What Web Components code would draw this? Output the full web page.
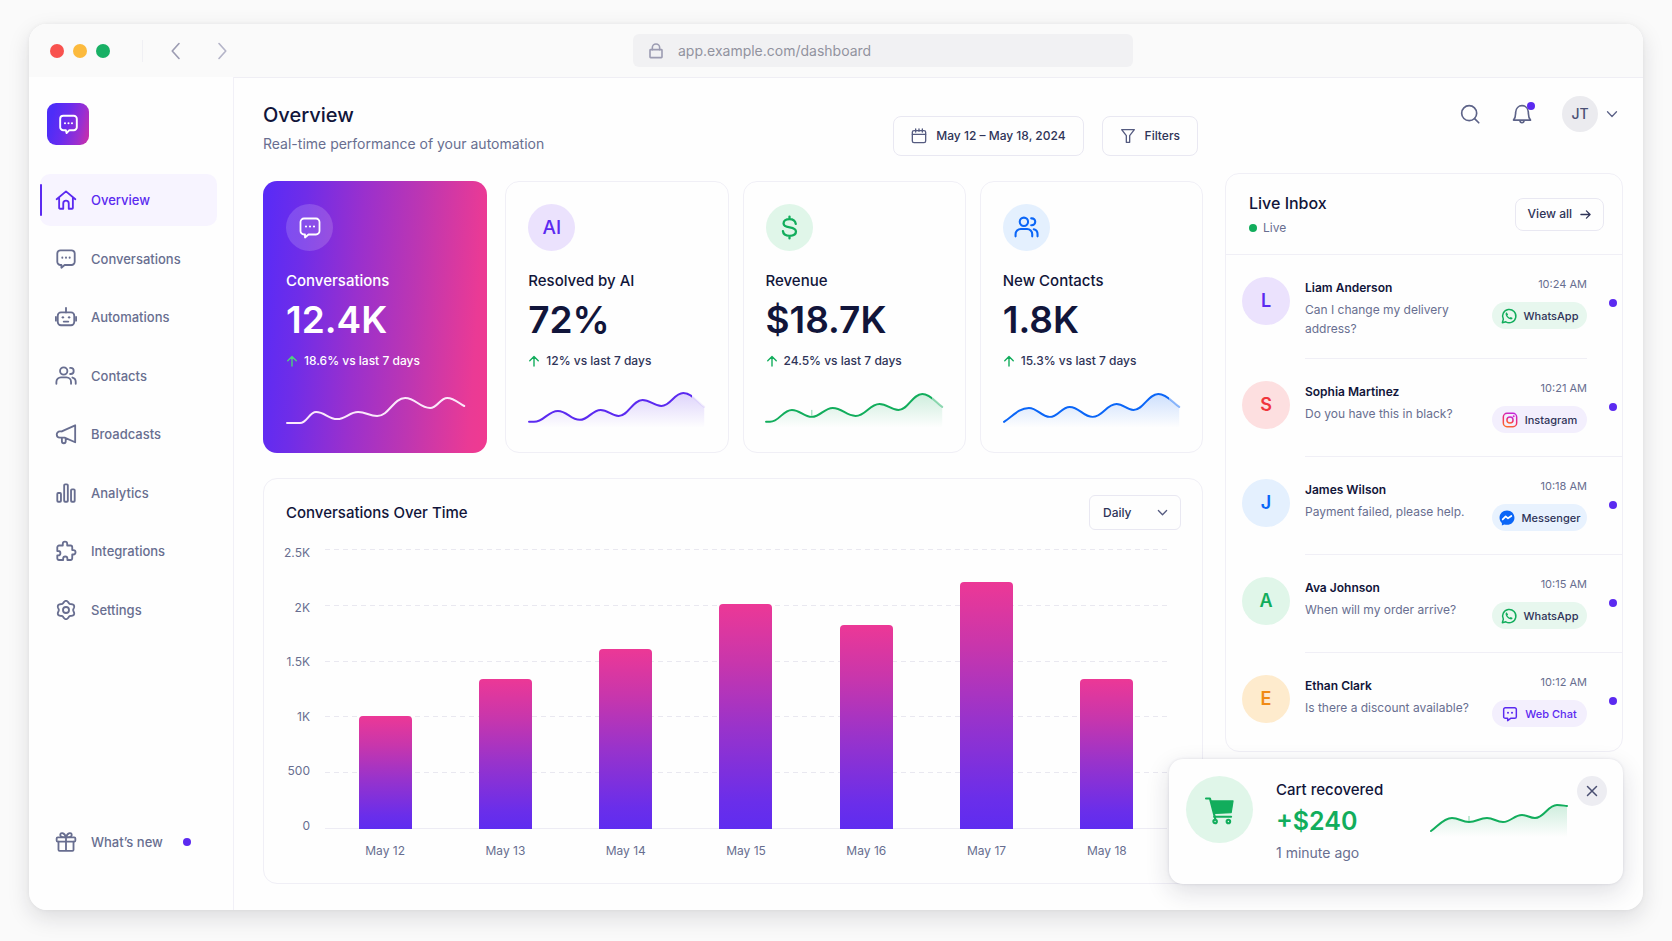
<!DOCTYPE html>
<html lang="en">
<head>
<meta charset="utf-8">
<meta name="viewport" content="width=device-width, initial-scale=1">
<title>Overview dashboard</title>
<style>
  :root {
    --ink: #11153a;
    --body: #2f3458;
    --muted: #686e90;
    --faint: #9a9bb0;
    --line: #f0eff6;
    --line-strong: #e9e8f2;
    --violet: #5b2af0;
    --violet-soft: #ebe2fd;
    --green: #12ad5c;
    --green-soft: #e0f6e9;
    --blue: #0b66f7;
    --blue-soft: #e4f0fe;
    --red: #f0353c;
    --red-soft: #fddfe0;
    --orange: #f08a14;
    --orange-soft: #feebcd;
    --surface: #fefefe;
  }
  * { box-sizing: border-box; }
  body {
    margin: 0;
    background: #fafafa;
    color: var(--ink);
    font-family: Inter, "Liberation Sans", sans-serif;
    font-size: 13px;
  }
</style>
</head>
<body>
<browser-window address="app.example.com/dashboard">
  <side-nav slot="side">
    <nav-item icon="home" active>Overview</nav-item>
    <nav-item icon="chat">Conversations</nav-item>
    <nav-item icon="bot">Automations</nav-item>
    <nav-item icon="users">Contacts</nav-item>
    <nav-item icon="megaphone">Broadcasts</nav-item>
    <nav-item icon="bars">Analytics</nav-item>
    <nav-item icon="puzzle">Integrations</nav-item>
    <nav-item icon="gear">Settings</nav-item>
    <nav-item icon="gift" slot="footer" dot>What’s new</nav-item>
  </side-nav>

  <dash-main>
    <page-header slot="header" heading="Overview" sub="Real-time performance of your automation">
      <tool-button icon="calendar">May 12 – May 18, 2024</tool-button>
      <tool-button icon="funnel">Filters</tool-button>
    </page-header>

    <stat-card slot="stats" featured label="Conversations" value="12.4K" change="18.6% vs last 7 days">
      <ui-icon slot="icon" name="chat" size="24"></ui-icon>
      <spark-line slot="spark" points="1,33 14,33 30,22 51,29 72,22 91,26 119,8 144,18 161,8 178,16" nofill></spark-line>
    </stat-card>
    <stat-card slot="stats" tone="violet" label="Resolved by AI" value="72%" change="12% vs last 7 days">
      <span slot="icon">AI</span>
      <spark-line slot="spark" points="1,32 6,32 30,21 52,30 73,20 91,26 115,10 134,16 156,3 177,17" fade="0.93" tail="0.08"></spark-line>
    </stat-card>
    <stat-card slot="stats" tone="green" label="Revenue" value="$18.7K" change="24.5% vs last 7 days">
      <ui-icon slot="icon" name="dollar" size="25"></ui-icon>
      <spark-line slot="spark" points="0,32 4,32 26,20 46,27 67,18 90,26 114,14 133,20 157,4 177,17" mark="46,20" fade="0.94" tail="0.45"></spark-line>
    </stat-card>
    <stat-card slot="stats" tone="blue" label="New Contacts" value="1.8K" change="15.3% vs last 7 days">
      <ui-icon slot="icon" name="users" size="25" weight="2"></ui-icon>
      <spark-line slot="spark" points="1,32 26,18 47,27 67,17 90,27 114,14 131,20 156,4 177,17" fade="0.94" tail="0.45"></spark-line>
    </stat-card>

    <bar-chart slot="chart" heading="Conversations Over Time" max="2500"
      data="May 12:1005,May 13:1335,May 14:1605,May 15:2005,May 16:1820,May 17:2205,May 18:1335"
      ticks="2.5K,2K,1.5K,1K,500,0"></bar-chart>

    <user-bar slot="aside" initials="JT"></user-bar>
    <live-inbox slot="aside">
      <inbox-item tone="violet" name="Liam Anderson" time="10:24 AM" channel="WhatsApp">Can I change my delivery address?</inbox-item>
      <inbox-item tone="red" name="Sophia Martinez" time="10:21 AM" channel="Instagram" wide>Do you have this in black?</inbox-item>
      <inbox-item tone="blue" name="James Wilson" time="10:18 AM" channel="Messenger" wide>Payment failed, please help.</inbox-item>
      <inbox-item tone="green" name="Ava Johnson" time="10:15 AM" channel="WhatsApp" wide>When will my order arrive?</inbox-item>
      <inbox-item tone="orange" name="Ethan Clark" time="10:12 AM" channel="Web Chat" last>Is there a discount available?</inbox-item>
    </live-inbox>
  </dash-main>

  <cart-toast slot="overlay" heading="Cart recovered" amount="+$240" when="1 minute ago"></cart-toast>
</browser-window>

<script>
const RESET = `*{box-sizing:border-box}button,input,select{font:inherit;color:inherit;margin:0}button{cursor:pointer}`;

function define(name, render) {
  customElements.define(name, class extends HTMLElement {
    constructor() {
      super();
      this.attachShadow({ mode: 'open' });
    }
    connectedCallback() {
      const t = document.createElement('template');
      t.innerHTML = render(this, k => this.getAttribute(k) || '');
      this.shadowRoot.replaceChildren(t.content.cloneNode(true));
    }
  });
}

/* Six-lobed outline of the settings gear */
const gearPath = (() => {
  let d = '';
  for (let i = 0; i < 96; i++) {
    const a = i / 96 * Math.PI * 2;
    const r = 8.9 + 1.1 * Math.cos(6 * a);
    d += (i ? 'L' : 'M') + (12 + r * Math.sin(a)).toFixed(2) + ' ' + (12 - r * Math.cos(a)).toFixed(2);
  }
  return d + 'Z';
})();

const dot = (x, y, r = 1) => `<circle cx="${x}" cy="${y}" r="${r}" fill="currentColor" stroke="none"/>`;

const ICONS = {
  home: '<path d="M1.8 11.2 12 2.6l10.200 8.600M4.500 9.500V20.600a.9.9 0 0 0 .9.9H9v-5.800a3 3 0 0 1 6 0v5.800h3.600a.9.900 0 0 0 .9-.9V9.500"/>',
  chat: '<path d="M6 2.500h12a3.500 3.500 0 0 1 3.500 3.500v9a3.500 3.500 0 0 1-3.500 3.500h-7.500l-3.500 3v-3H6A3.500 3.500 0 0 1 2.500 15V6A3.500 3.500 0 0 1 6 2.500z"/>' + dot(8, 10.5, 1.1) + dot(12, 10.5, 1.1) + dot(16, 10.5, 1.1),
  logo: '<path d="M6 2h12a3.500 3.500 0 0 1 3.500 3.500v9.500a3.500 3.500 0 0 1-3.500 3.500h-5l-3.200 3.200-.8-3.200H6A3.500 3.500 0 0 1 2.500 15V5.500A3.500 3.500 0 0 1 6 2z"/>' + dot(8, 10.5, 1.2) + dot(12, 10.5, 1.2) + dot(16, 10.5, 1.2),
  bot: '<rect x="3" y="7" width="18" height="14" rx="3.500"/><path d="M12 2v5M1 12v4M23 12v4M9.500 17h5"/>' + dot(8.6, 12.4, 1.3) + dot(15.4, 12.4, 1.3),
  users: '<circle cx="9.500" cy="6.500" r="4"/><path d="M1.500 20.500v-2a5 5 0 0 1 5-5h6a5 5 0 0 1 5 5v2M16.500 3.200h.6a3.300 3.300 0 0 1 0 6.600h-.6M19 13.700a4.800 4.800 0 0 1 3.600 4.800v2"/>',
  megaphone: '<path d="M22 2.500v18.500L10.500 16H5.300a3.400 3.400 0 0 1 0-6.800h2zM7.500 9.200 22 2.500M7.500 16v4a2 2 0 0 0 4.200 0v-3.500"/>',
  bars: '<rect x="2.500" y="12" width="4" height="9.500" rx="1"/><rect x="10" y="2.500" width="4" height="19" rx="1"/><rect x="17.500" y="8" width="4" height="13.500" rx="1"/>',
  puzzle: '<path d="M2.500 8A2 2 0 0 1 4.500 6H8.500V4.200a2.400 2.400 0 0 1 4.800 0V6H17a1.800 1.800 0 0 1 1.800 1.800V11h1.200a2.400 2.400 0 0 1 0 4.800h-1.200V20a1.800 1.800 0 0 1-1.800 1.800H13.500v-1.500a2.300 2.300 0 0 0-4.600 0v1.500H4.300A1.800 1.800 0 0 1 2.500 20v-3.200h1a2.400 2.400 0 0 0 0-4.800h-1z"/>',
  gear: `<path d="${gearPath}"/><circle cx="12" cy="12" r="3.300"/>`,
  gift: '<rect x="1.800" y="7" width="20.400" height="4.600" rx="1.200"/><path d="M3.800 11.600v8.900a1.200 1.200 0 0 0 1.200 1.200h14a1.200 1.200 0 0 0 1.200-1.200v-8.900M12 7v14.500M12 7C10.500 1.500 5.200 1 5.800 4.800 6.100 6.600 8 7 12 7zM12 7c1.500-5.500 6.800-6 6.200-2.200C17.900 6.600 16 7 12 7z"/>',
  calendar: '<rect x="2" y="4" width="20" height="18" rx="2.500"/><path d="M2 9.500h20M7 1.500V6M12 1.500V5M17 1.500V6"/>',
  funnel: '<path d="M2.500 2.500h19l-7 9v10h-5v-10z"/>',
  search: '<circle cx="11" cy="11" r="9"/><path d="M17.500 17.500 22.500 22.500"/>',
  bell: '<path d="M1.800 19.300C4.500 16.500 4.200 14 4.400 9.800 4.700 5.200 8 2 12 2s7.300 3.200 7.600 7.800c.2 4.200-.1 6.700 2.600 9.500zM9.500 19.500c.3 4 4.700 4 5 0"/>',
  left: '<path d="M16 2 7 12l9 10"/>',
  right: '<path d="M8 2l9 10-9 10"/>',
  down: '<path d="M3 7.500 12 17l9-9.500"/>',
  lock: '<rect x="3" y="10" width="18" height="12" rx="1"/><path d="M6.500 10V7a5.500 5.500 0 0 1 11 0v3"/>',
  arrow: '<path d="M2 12h20M14 4l8 8-8 8"/>',
  up: '<path d="M12 22V3M3.500 11.500 12 3l8.500 8.500"/>',
  close: '<path d="M3 3l18 18M21 3 3 21"/>',
  dollar: '<path d="M12 1.500V4M12 20v2.500M18 8.500C17.500 5.500 15 4 12 4 8.800 4 6.300 5.500 6.300 8.100c0 5.400 11.900 2.300 11.900 7.800C18.200 18.600 15.500 20 12.200 20 8.700 20 6 18.600 5.700 15.500" stroke-width="2.200"/>',
  cart: '<path d="M0 2.200h3.400L7.900 19.400" /><path d="M4.500 4.200h18.700L21.600 14.300 7.300 15z" fill="currentColor" stroke-width="1"/><path d="M7 17.800h14.500"/><circle cx="7.800" cy="21.800" r="1.500"/><circle cx="19.200" cy="21.800" r="1.500"/>',
  WhatsApp: '<path d="M2 22l1.500-5.200A10 10 0 1 1 7.200 20.700z"/><path d="M8.300 6.500c-1.500.8-1.700 2.500-1 4.200 1.300 3 3.500 5.200 6.700 6.300 1.800.5 3.200-.3 3.500-1.900l-2.900-1.700-1.400 1.300c-1.700-.8-2.900-2-3.700-3.500l1.200-1.500z" fill="currentColor" stroke="none"/>',
  Instagram: '<g stroke="url(#ig)"><rect x="2" y="2" width="20" height="20" rx="5.500"/><circle cx="12" cy="12" r="4.600"/></g><circle cx="17.500" cy="6.500" r="1.500" fill="#d62bc0" stroke="none"/>',
  Messenger: '<path d="M12 .8C5.500.8.8 5.500.8 11.600c0 3.400 1.300 6.100 3.500 8v3.600l3.600-1.500c1.300.4 2.700.6 4.100.6 6.500 0 11.200-4.700 11.200-10.700S18.500.8 12 .8z" fill="currentColor" stroke="none"/><path d="M5.500 14.200 10 9.500l3.500 3 5-3.500" stroke="#fff" stroke-width="2.600"/>',
  'Web Chat': '<path d="M5 2.500h14A2.500 2.500 0 0 1 21.500 5v11a2.500 2.500 0 0 1-2.500 2.500h-6l-4.500 3.500v-3.500H5A2.500 2.500 0 0 1 2.500 16V5A2.500 2.500 0 0 1 5 2.500z"/>' + dot(9, 10, 1.5) + dot(15, 10, 1.5)
};

define('ui-icon', (el, a) => {
  const s = a('size') || 22;
  const w = a('weight') || 1.8;
  return `<style>:host{display:inline-flex;flex:none}svg{display:block;overflow:visible}</style>
  <svg width="${s}" height="${s}" viewBox="0 0 24 24" fill="none" stroke="currentColor" stroke-width="${w}" stroke-linecap="round" stroke-linejoin="round" aria-hidden="true">
  <defs><linearGradient id="ig" x1="0.7" y1="0" x2="0.3" y2="1"><stop offset="0" stop-color="#c626d8"/><stop offset=".5" stop-color="#ee2a72"/><stop offset="1" stop-color="#fb6a2c"/></linearGradient></defs>
  ${ICONS[a('name')] || ''}</svg>`;
});

/* Smooth line: inner points are crests and troughs, so the tangent there is level */
function smooth(pts) {
  let d = `M${pts[0][0]} ${pts[0][1]}`;
  for (let i = 1; i < pts.length; i++) {
    const [x0, y0] = pts[i - 1], [x1, y1] = pts[i];
    const dx = x1 - x0, dy = y1 - y0;
    const c1 = i === 1 ? [x0 + dx * .3, y0 + dy * .3] : [x0 + dx * .42, y0];
    const c2 = i === pts.length - 1 ? [x1 - dx * .3, y1 - dy * .3] : [x1 - dx * .42, y1];
    d += `C${c1} ${c2} ${x1} ${y1}`;
  }
  return d;
}

define('spark-line', (el, a) => {
  const pts = a('points').split(' ').map(p => p.split(',').map(Number));
  const w = Number(a('width')) || 178, h = Number(a('height')) || 38;
  const line = smooth(pts), end = pts[pts.length - 1][0];
  const fade = a('fade') || 1, tail = a('tail') || 1;
  const mark = a('mark') ? a('mark').split(',') : null;
  return `<style>:host{display:block}svg{display:block;width:100%;height:auto;overflow:visible}</style>
  <svg viewBox="0 0 ${w} ${h}" fill="none" aria-hidden="true">
    <defs>
      <linearGradient id="f" x1="0" y1="0" x2="0" y2="1"><stop offset="0" stop-color="currentColor" stop-opacity=".2"/><stop offset="1" stop-color="currentColor" stop-opacity="0"/></linearGradient>
      <linearGradient id="s" gradientUnits="userSpaceOnUse" x1="0" y1="0" x2="${end}" y2="0"><stop offset="${fade}" stop-color="currentColor"/><stop offset="${fade}" stop-color="currentColor" stop-opacity="${tail}"/></linearGradient>
    </defs>
    ${el.hasAttribute('nofill') ? '' : `<path d="${line}V${h}H${pts[0][0]}Z" fill="url(#f)"/>`}
    ${mark ? `<path d="M${mark[0]} ${mark[1]}v7" stroke="currentColor" stroke-opacity=".5"/>` : ''}
    <path d="${line}" stroke="url(#s)" stroke-width="2" stroke-linecap="round"/>
  </svg>`;
});

define('browser-window', (el, a) => `<style>${RESET}
  :host{display:flex;flex-direction:column;min-height:100vh;padding:24px 29px 31px}
  .win{position:relative;flex:1;display:flex;flex-direction:column;border-radius:18px;background:var(--surface);overflow:hidden}
  .shade{flex:1;display:flex;flex-direction:column;border-radius:18px;box-shadow:0 0 4px rgba(20,20,40,.05),0 8px 22px rgba(20,20,40,.13)}
  header{display:flex;align-items:center;height:53px;padding:0 20px 0 21px;background:#fafafa;color:#9c9cb2}
  .lights{display:flex;gap:9px}
  .lights i{width:14px;height:14px;border-radius:50%;background:#f8524e}
  .lights i:nth-child(2){background:#fcba3d}
  .lights i:nth-child(3){background:#18b065}
  .sep{width:1px;height:22px;margin:0 23px 0 32px;background:#f0f0f4}
  .nav{border:0;background:none;padding:0;display:flex;width:20px;justify-content:center}
  .nav + .nav{margin-left:26px;color:#b4b4c8}
  .a{flex:401}.b{flex:490}
  label{flex:0 1 500px;height:33px;display:flex;align-items:center;gap:14px;padding:0 15px;border-radius:6px;background:#f1f1f3}
  input{flex:1;min-width:0;border:0;padding:0;background:none;outline:0;font-size:14px;line-height:20px;color:#92939f}
  .body{flex:1;display:flex}
</style>
<div class="shade"><div class="win">
  <header>
    <div class="lights"><i></i><i></i><i></i></div>
    <div class="sep"></div>
    <button class="nav" aria-label="Back"><ui-icon name="left" size="18" weight="2.200"></ui-icon></button>
    <button class="nav" aria-label="Forward"><ui-icon name="right" size="18" weight="2.200"></ui-icon></button>
    <div class="a"></div>
    <label><ui-icon name="lock" size="16" weight="2.400"></ui-icon><input type="text" aria-label="Address" value="${a('address')}"></label>
    <div class="b"></div>
  </header>
  <div class="body"><slot name="side"></slot><slot></slot></div>
  <slot name="overlay"></slot>
</div></div>`);

define('side-nav', () => `<style>${RESET}
  :host{display:flex;flex-direction:column;flex:none;width:205px;padding:26px 16px 42px 11px;border-right:1px solid #f1f0f7}
  .logo{display:flex;align-items:center;justify-content:center;width:42px;height:42px;margin:0 0 29px 7px;border-radius:9px;color:#fff;background:linear-gradient(105deg,#4d2df8 15%,#6a2cee 45%,#9a2fd0 75%,#d02fa4 100%)}
  nav{flex:0 1 462px;display:flex;flex-direction:column;justify-content:space-between}
  footer{margin-top:auto}
</style>
<a class="logo" href="#" aria-label="Home"><ui-icon name="logo" size="21" weight="2.200"></ui-icon></a>
<nav aria-label="Main"><slot></slot></nav>
<footer><slot name="footer"></slot></footer>`);

define('nav-item', (el) => `<style>${RESET}
  :host{display:block;color:var(--muted)}
  :host([active]){color:var(--violet)}
  a{position:relative;display:flex;align-items:center;gap:14px;height:52px;padding-left:15px;border-radius:10px;color:inherit;text-decoration:none;font-size:13px;line-height:20px;font-weight:450}
  :host([active]) a{background:#f7f4ff}
  :host([active]) a::before{content:"";position:absolute;left:0;top:10px;bottom:10px;width:2px;border-radius:2px;background:var(--violet)}
  i{width:8px;height:8px;margin-left:6px;border-radius:50%;background:var(--violet)}
</style>
<a href="#"${el.hasAttribute('active') ? ' aria-current="page"' : ''}><ui-icon name="${el.getAttribute('icon')}" size="22" weight="2"></ui-icon><slot></slot>${el.hasAttribute('dot') ? '<i></i>' : ''}</a>`);

define('dash-main', () => `<style>${RESET}
  :host{flex:1;min-width:0;display:grid;grid-template-columns:minmax(0,1fr) 398px;gap:22px;padding:0 20px 26px 29px;border-top:1px solid #efeef4}
  main{display:flex;flex-direction:column;gap:25px;padding-top:25px;min-width:0}
  .stats{display:grid;grid-template-columns:minmax(0,228fr) repeat(3,minmax(0,223fr));gap:14px}
  aside{min-width:0}
</style>
<main><slot name="header"></slot><section class="stats"><slot name="stats"></slot></section><slot name="chart"></slot></main>
<aside><slot name="aside"></slot></aside>`);

define('page-header', (el, a) => `<style>${RESET}
  :host{display:flex;justify-content:space-between;align-items:flex-end;padding-right:5px;min-height:53px}
  .t{align-self:flex-start}
  h1{margin:0 0 7px;font-size:20px;line-height:24px;font-weight:550;color:var(--ink)}
  p{margin:0;font-size:14px;line-height:20px;color:var(--muted)}
  .acts{display:flex;gap:18px}
</style>
<div class="t"><h1>${a('heading')}</h1><p>${a('sub')}</p></div><div class="acts"><slot></slot></div>`);

define('tool-button', (el, a) => `<style>${RESET}
  :host{display:block}
  button{display:flex;align-items:center;gap:9px;height:40px;padding:0 17px;border:1px solid var(--line-strong);border-radius:8px;background:var(--surface);font-size:12px;line-height:16px;font-weight:500;color:var(--body)}
  ui-icon{color:#555b80}
</style>
<button type="button"><ui-icon name="${a('icon')}" size="16" weight="2"></ui-icon><slot></slot></button>`);

define('stat-card', (el, a) => `<style>${RESET}
  :host{display:flex;flex-direction:column;height:272px;padding:22px;border:1px solid var(--line);border-radius:14px;background:var(--surface)}
  :host([featured]){margin-right:4px;border-color:transparent;color:#fff;background:linear-gradient(94deg,#5a2bf6 2%,#6f2de8 18%,#9a30cd 42%,#bd36b2 66%,#ea3a95 92%,#f03a90 100%) border-box;--val:#fff;--chg:#fff;--up:#4fd07c;--spark:#fbe9fb;--tone:#fff;--soft:rgba(255,255,255,.16)}
  :host([tone=violet]){--tone:var(--violet);--soft:var(--violet-soft)}
  :host([tone=green]){--tone:var(--green);--soft:var(--green-soft)}
  :host([tone=blue]){--tone:var(--blue);--soft:var(--blue-soft)}
  .ic{display:flex;align-items:center;justify-content:center;width:47px;height:47px;border-radius:50%;background:var(--soft);color:var(--tone);font-size:19px;line-height:24px;font-weight:550}
  h2{margin:20px 0 0;font-size:15px;line-height:20px;font-weight:500}
  .v{margin-top:7px;font-size:37px;line-height:44px;font-weight:600;color:var(--val,var(--ink))}
  .c{display:flex;align-items:center;gap:6px;margin-top:11px;font-size:12px;line-height:16px;font-weight:450;color:var(--chg,var(--body))}
  .c ui-icon{color:var(--up,var(--green))}
  .s{margin-top:21px;color:var(--spark,var(--tone))}
</style>
<div class="ic"><slot name="icon"></slot></div>
<h2>${a('label')}</h2>
<div class="v">${a('value')}</div>
<div class="c"><ui-icon name="up" size="12" weight="2.800"></ui-icon><span>${a('change')}</span></div>
<div class="s"><slot name="spark"></slot></div>`);

define('bar-chart', (el, a) => {
  const max = Number(a('max'));
  const data = a('data').split(',').map(s => s.split(':'));
  const ticks = a('ticks').split(',');
  return `<style>${RESET}
  :host{flex:1;display:flex;flex-direction:column;min-height:406px;padding:16px 21px 10px 22px;border:1px solid var(--line);border-radius:14px;background:var(--surface)}
  header{display:flex;justify-content:space-between;align-items:center}
  h2{margin:0;font-size:15px;line-height:20px;font-weight:550}
  .sel{display:grid;align-items:center}
  .sel>*{grid-area:1/1}
  select{appearance:none;width:92px;height:35px;padding:0 13px;border:1px solid var(--line-strong);border-radius:6px;background:var(--surface);font-size:12px;font-weight:500;color:var(--body)}
  .sel ui-icon{justify-self:end;margin-right:13px;pointer-events:none;color:#555b80}
  figure{flex:1;display:grid;grid-template:minmax(0,1fr) 44px / 24px minmax(0,1fr);column-gap:15px;margin:19px 14px 0 0}
  .y{display:flex;flex-direction:column;justify-content:space-between;align-items:flex-end;margin:-4px 0 -5px;font-size:12px;line-height:16px;color:var(--muted)}
  .y span:first-child{white-space:nowrap}
  .plot{display:grid;min-height:200px}
  .plot>*{grid-area:1/1}
  .g{display:flex;flex-direction:column;justify-content:space-between}
  .g i{height:1px;background:repeating-linear-gradient(90deg,#e9e8f0 0 5px,transparent 5px 9px)}
  .g i:last-child{background:#edecf4}
  .bars,.x{display:grid;grid-template-columns:repeat(${data.length},minmax(0,1fr));justify-items:center}
  .bars{align-items:end}
  .bars b{width:53px;border-radius:4px 4px 0 0;background:linear-gradient(#ec3896,#c836ac 26%,#9933cb 55%,#6a2eea 88%,#5f2cf0)}
  .x{grid-column:2;align-items:center;font-size:12px;line-height:16px;color:var(--muted)}
</style>
<header><h2>${a('heading')}</h2><div class="sel"><select aria-label="Interval"><option>Daily</option><option>Weekly</option><option>Monthly</option></select><ui-icon name="down" size="11" weight="2.800"></ui-icon></div></header>
<figure aria-label="${a('heading')}">
  <div class="y">${ticks.map(t => `<span>${t}</span>`).join('')}</div>
  <div class="plot"><div class="g">${ticks.map(() => '<i></i>').join('')}</div>
  <div class="bars">${data.map(d => `<b style="height:${d[1] / max * 100}%"></b>`).join('')}</div></div>
  <div class="x">${data.map(d => `<span>${d[0]}</span>`).join('')}</div>
</figure>`;
});

define('user-bar', (el, a) => `<style>${RESET}
  :host{display:flex;justify-content:flex-end;align-items:center;height:36px;margin:18px 5px 41px 0;color:#5d6388}
  button{position:relative;display:flex;align-items:center;border:0;padding:0;background:none}
  .bell{margin:0 30px 0 32px}
  .bell::after{content:"";position:absolute;right:-3px;top:-2px;width:8px;height:8px;border-radius:50%;background:var(--violet)}
  .me{gap:8px}
  .me span{display:flex;align-items:center;justify-content:center;width:36px;height:36px;border-radius:50%;background:#ebebef;font-size:14px;line-height:20px;font-weight:500;color:#4a5075}
</style>
<button aria-label="Search"><ui-icon name="search" size="20" weight="2"></ui-icon></button>
<button class="bell" aria-label="Notifications"><ui-icon name="bell" size="20" weight="2"></ui-icon></button>
<button class="me" aria-label="Account"><span>${a('initials')}</span><ui-icon name="down" size="12" weight="2.600"></ui-icon></button>`);

define('live-inbox', () => `<style>${RESET}
  :host{display:block;border:1px solid var(--line);border-radius:14px;background:var(--surface)}
  header{display:flex;justify-content:space-between;align-items:center;height:81px;padding:0 18px 0 23px;border-bottom:1px solid var(--line)}
  h2{margin:0 0 6px;font-size:16px;line-height:22px;font-weight:550}
  p{display:flex;align-items:center;gap:6px;margin:0;font-size:12px;line-height:16px;color:var(--muted)}
  p i{width:8px;height:8px;border-radius:50%;background:var(--green)}
  a{display:flex;align-items:center;gap:8px;height:33px;padding:0 12px;border:1px solid var(--line-strong);border-radius:8px;font-size:12px;line-height:16px;font-weight:500;color:var(--body);text-decoration:none}
</style>
<header><div><h2>Live Inbox</h2><p><i></i>Live</p></div><a href="#">View all <ui-icon name="arrow" size="11" weight="2.800"></ui-icon></a></header>
<div><slot></slot></div>`);

define('inbox-item', (el, a) => `<style>${RESET}
  :host{display:flex;min-height:98px;padding-left:16px}
  :host([tone=violet]){--tone:var(--violet);--soft:var(--violet-soft)}
  :host([tone=red]){--tone:var(--red);--soft:var(--red-soft)}
  :host([tone=green]){--tone:var(--green);--soft:var(--green-soft)}
  :host([tone=blue]){--tone:var(--blue);--soft:var(--blue-soft)}
  :host([tone=orange]){--tone:var(--orange);--soft:var(--orange-soft)}
  .av{display:flex;align-items:center;justify-content:center;flex:none;width:48px;height:48px;margin:22px 15px 0 0;border-radius:50%;background:var(--soft);color:var(--tone);font-size:18px;line-height:24px;font-weight:600}
  .c{flex:1;min-width:0;display:flex;gap:14px;border-bottom:1px solid var(--line)}
  .u{display:flex;align-items:flex-start;justify-content:flex-end;flex:none;width:35px;padding:44px 5px 0 0}
  .u i{width:8px;height:8px;border-radius:50%;background:var(--violet)}
  :host([wide]) .u{border-bottom:1px solid var(--line)}
  :host([last]) .c{border-color:transparent}
  .m{flex:1;min-width:0;padding:24px 0 20px}
  h3{margin:0 0 3px;font-size:12px;line-height:18px;font-weight:600}
  p{margin:0;font-size:12px;line-height:19px;color:var(--muted)}
  .r{display:flex;flex-direction:column;align-items:flex-end;gap:10px;padding-top:21px}
  time{font-size:11px;line-height:16px;color:var(--muted)}
  .tag{display:flex;align-items:center;justify-content:center;gap:7px;width:95px;height:27px;border-radius:14px;font-size:11px;line-height:16px;font-weight:500;color:var(--body);background:#f3effd}
  .tag ui-icon{color:var(--violet)}
  .WhatsApp{background:#e7f7ee}.WhatsApp ui-icon{color:var(--green)}
  .Messenger{background:#e8f2fe}.Messenger ui-icon{color:var(--blue)}
  .Web{color:var(--violet)}
</style>
<div class="av">${a('name')[0]}</div>
<div class="c"><div class="m"><h3>${a('name')}</h3><p><slot></slot></p></div>
<div class="r"><time>${a('time')}</time><span class="tag ${a('channel')}"><ui-icon name="${a('channel')}" size="16" weight="2.200"></ui-icon>${a('channel')}</span></div></div>
<div class="u"><i></i></div>`);

define('cart-toast', (el, a) => `<style>${RESET}
  :host{position:absolute;right:20px;bottom:26px;width:454px;min-height:125px;display:flex;align-items:flex-start;padding:17px 16px 16px 17px;border-radius:14px;background:var(--surface);box-shadow:0 0 3px rgba(30,30,70,.12),0 8px 24px rgba(30,30,60,.14)}
  .ic{display:flex;align-items:center;justify-content:center;width:67px;height:67px;margin-right:23px;border-radius:50%;background:var(--green-soft);color:var(--green)}
  .t{padding-top:4px}
  h2{margin:0;font-size:15px;line-height:20px;font-weight:500}
  b{display:block;margin:6px 0 7px;font-size:25px;line-height:30px;font-weight:600;color:var(--green)}
  p{margin:0;font-size:14px;line-height:20px;color:var(--muted)}
  spark-line{width:140px;margin:25px 7px 0 auto;color:var(--green)}
  button{display:flex;align-items:center;justify-content:center;width:30px;height:30px;padding:0;border:0;border-radius:50%;background:#ededf2;color:#4a4f72}
</style>
<div class="ic"><ui-icon name="cart" size="28" weight="1.800"></ui-icon></div>
<div class="t"><h2>${a('heading')}</h2><b>${a('amount')}</b><p>${a('when')}</p></div>
<spark-line width="140" height="36" points="1,30 22,17 39,21 57,17 73,21 92,14 105,17 127,4 137,5" mark="39,15"></spark-line>
<button aria-label="Close"><ui-icon name="close" size="12" weight="3"></ui-icon></button>`);
</script>
</body>
</html>
